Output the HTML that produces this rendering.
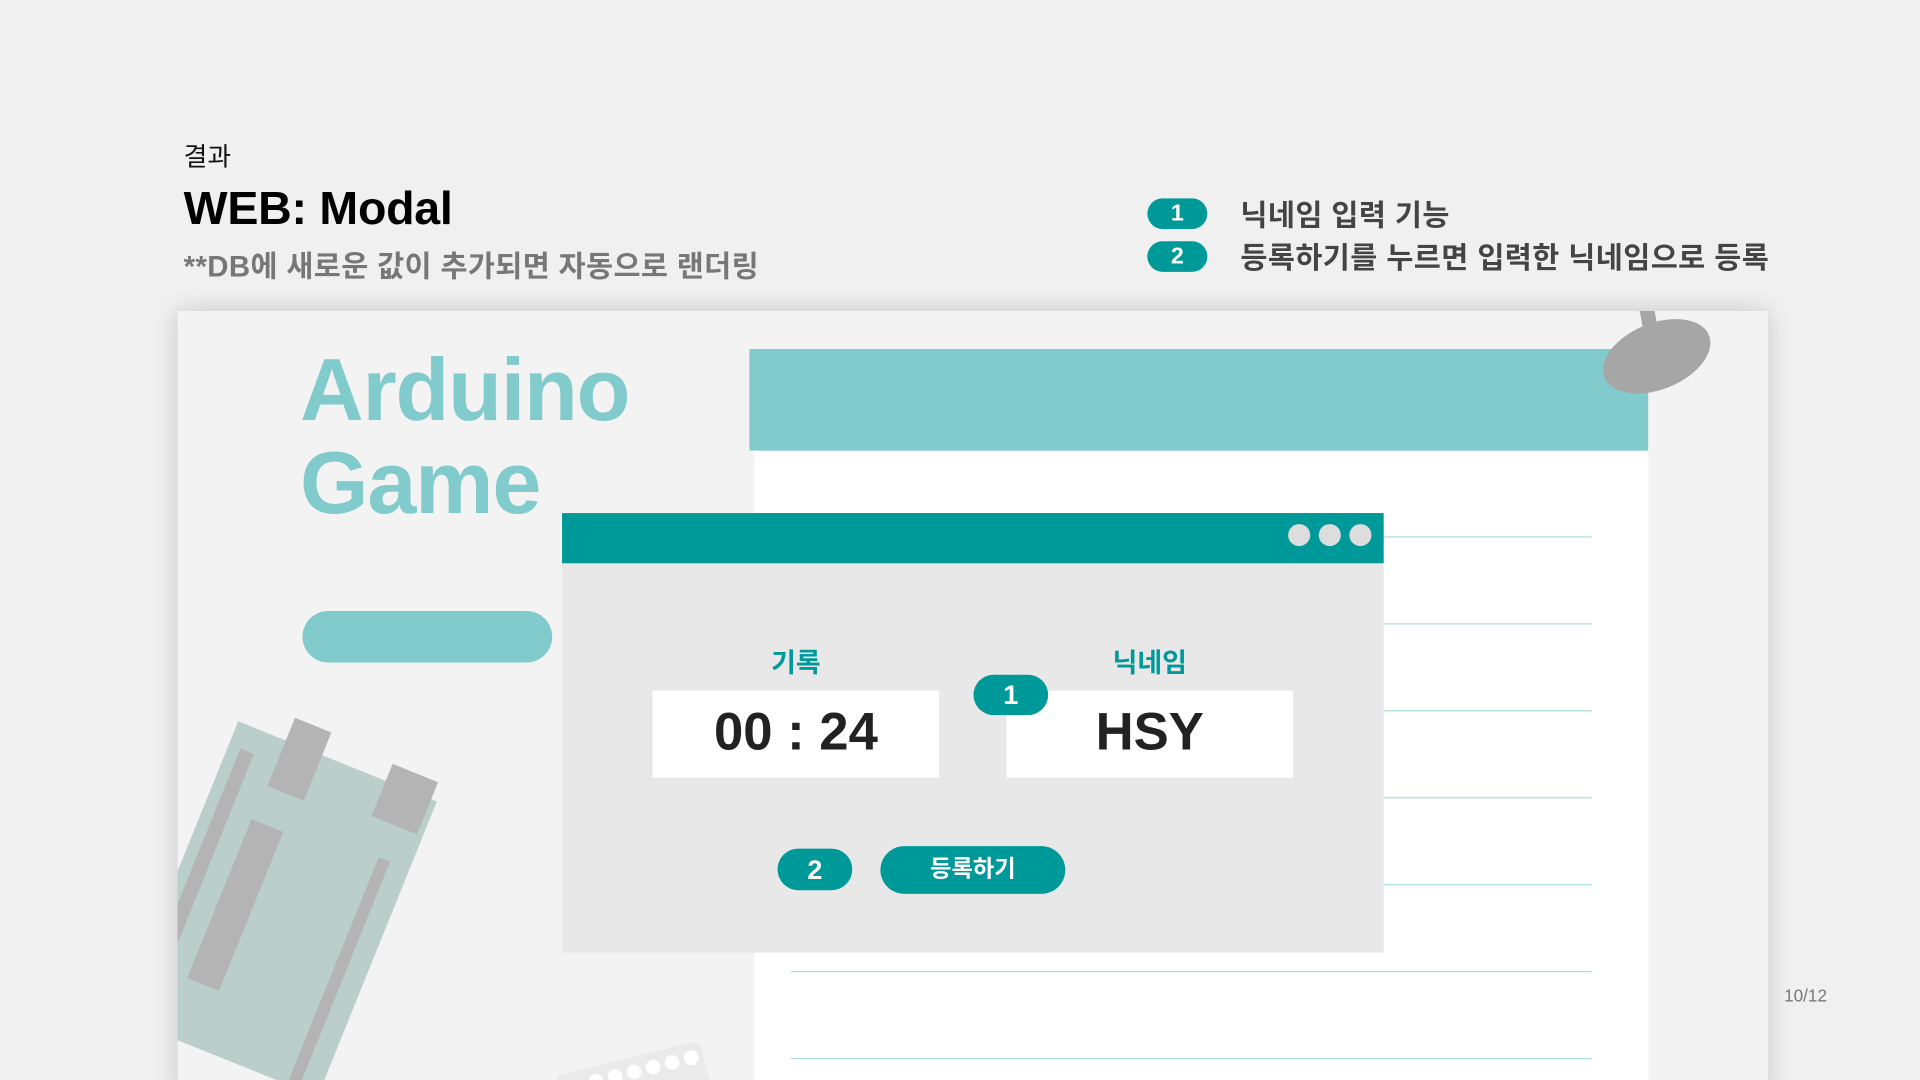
<!DOCTYPE html>
<html><head><meta charset="utf-8"><style>
html,body{margin:0;padding:0;width:1920px;height:1080px;overflow:hidden;background:#f0f0f0}
#s{position:absolute;left:0;top:0;width:1568px;height:882px;transform:scale(1.22449);transform-origin:0 0;font-family:"Liberation Sans","Noto Sans CJK KR",sans-serif;overflow:hidden}
.a{position:absolute}
.badge{position:absolute;background:#009999;color:#fff;border-radius:14px;font-weight:bold;text-align:center}
.line{position:absolute;left:646px;width:654px;height:1px;background:#a9dede}
</style></head><body><div id="s">
<div class="a" style="left:150px;top:112px;font-size:21px;color:#111">결과</div>
<div class="a" style="left:150px;top:150px;font-size:38px;font-weight:bold;color:#000;letter-spacing:-0.2px">WEB: Modal</div>
<div class="a" style="left:150px;top:198px;font-size:24px;font-weight:bold;color:#777;letter-spacing:0.3px">**DB에 새로운 값이 추가되면 자동으로 랜더링</div>

<div class="badge" style="left:937px;top:162px;width:49px;height:25px;line-height:25px;font-size:19px;border-radius:13px">1</div>
<div class="badge" style="left:937px;top:197px;width:49px;height:25px;line-height:25px;font-size:19px;border-radius:13px">2</div>
<div class="a" style="left:1013px;top:156px;font-size:24px;font-weight:bold;color:#444;letter-spacing:0.35px">닉네임 입력 기능</div>
<div class="a" style="left:1013px;top:191px;font-size:24px;font-weight:bold;color:#444;letter-spacing:0.35px">등록하기를 누르면 입력한 닉네임으로 등록</div>

<div class="a" style="left:145px;top:254px;width:1299px;height:640px;background:#f3f3f3;box-shadow:0 0 18px rgba(0,0,0,0.18)"></div>
<div class="a" style="left:145px;top:254px;width:1299px;height:628px;overflow:hidden">
 <div class="a" style="left:471px;top:114px;width:730px;height:520px;background:#fff"></div>
 <div class="a" style="left:467px;top:31px;width:734px;height:83px;background:#82cbcc"></div>
 <svg class="a" style="left:1140px;top:0" width="130" height="80"><rect x="56" y="-10" width="12" height="36" rx="5" fill="#a6a6a6" transform="rotate(-10 62 10)"/><ellipse cx="68" cy="37" rx="46" ry="27" fill="#a6a6a6" transform="rotate(-22 68 37)"/></svg>
 <div class="a" style="left:100px;top:27px;font-size:72px;font-weight:bold;color:#82cbcc;line-height:76px;letter-spacing:-1px">Arduino<br>Game</div>
 <div class="a" style="left:102px;top:245px;width:204px;height:42px;border-radius:21px;background:#82cbcc"></div>
 <svg class="a" style="left:0;top:300px" width="260" height="330">
  <g transform="translate(-22,0) rotate(22 110 180)">
   <rect x="20" y="60" width="175" height="260" fill="#bbcfca"/>
   <rect x="62" y="40" width="32" height="60" fill="#b4b4b4"/>
   <rect x="150" y="45" width="40" height="46" fill="#b4b4b4"/>
   <rect x="30" y="80" width="12" height="200" fill="#b4b4b4"/>
   <rect x="60" y="130" width="28" height="140" fill="#b4b4b4"/>
   <rect x="168" y="120" width="10" height="200" fill="#b4b4b4"/>
  </g>
 </svg>
 <svg class="a" style="left:300px;top:598px" width="140" height="40"><g transform="rotate(-14 70 20)"><rect x="10" y="12" width="120" height="40" fill="#eaeaea"/><g fill="#fff"><circle cx="40" cy="24" r="6"/><circle cx="56" cy="24" r="6"/><circle cx="72" cy="24" r="6"/><circle cx="88" cy="24" r="6"/><circle cx="104" cy="24" r="6"/><circle cx="120" cy="24" r="6"/></g></g></svg>
</div>
<div class="line" style="top:438px"></div><div class="line" style="top:509px"></div><div class="line" style="top:580px"></div><div class="line" style="top:651px"></div><div class="line" style="top:722px"></div><div class="line" style="top:793px"></div><div class="line" style="top:864px"></div>

<div class="a" style="left:459px;top:419px;width:671px;height:359px;background:#e8e8e8"></div>
<div class="a" style="left:459px;top:419px;width:671px;height:41px;background:#009999"></div>
<div class="a" style="left:1052px;top:428px;width:18px;height:18px;border-radius:9px;background:#ddd"></div>
<div class="a" style="left:1077px;top:428px;width:18px;height:18px;border-radius:9px;background:#ddd"></div>
<div class="a" style="left:1102px;top:428px;width:18px;height:18px;border-radius:9px;background:#ddd"></div>

<div class="a" style="left:533px;top:524px;width:234px;text-align:center;font-size:22px;font-weight:bold;color:#009999">기록</div>
<div class="a" style="left:822px;top:524px;width:234px;text-align:center;font-size:22px;font-weight:bold;color:#009999">닉네임</div>
<div class="a" style="left:533px;top:564px;width:234px;height:71px;background:#fff;text-align:center;line-height:68px;font-size:43px;font-weight:bold;color:#222">00 : 24</div>
<div class="a" style="left:822px;top:564px;width:234px;height:71px;background:#fff;text-align:center;line-height:68px;font-size:43px;font-weight:bold;color:#222">HSY</div>
<div class="badge" style="left:795px;top:551px;width:61px;height:33px;line-height:34px;font-size:22px;border-radius:17px">1</div>
<div class="badge" style="left:635px;top:693px;width:61px;height:34px;line-height:35px;font-size:22px;border-radius:17px">2</div>
<div class="badge" style="left:719px;top:691px;width:151px;height:39px;line-height:40px;font-size:19px;border-radius:20px">등록하기</div>

<div class="a" style="left:1457px;top:805px;font-size:14px;color:#777">10/12</div>
</div></body></html>
